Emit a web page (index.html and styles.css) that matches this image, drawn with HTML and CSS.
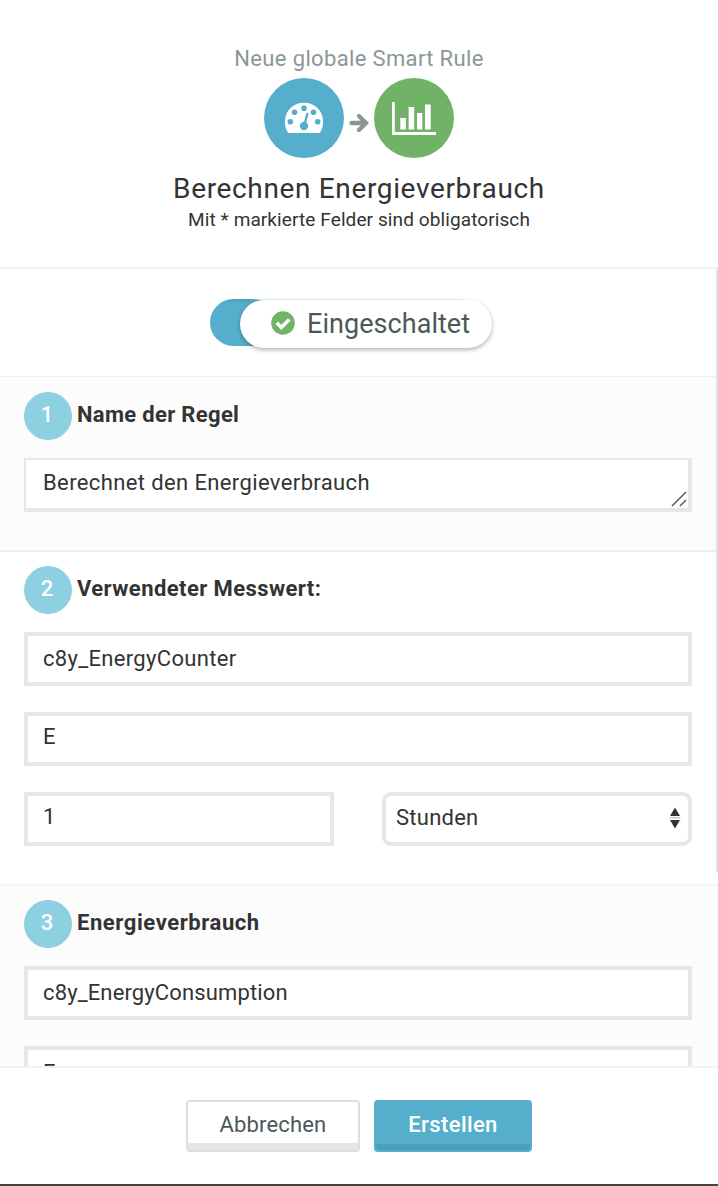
FILE: index.html
```
<!DOCTYPE html>
<html lang="de">
<head>
<meta charset="utf-8">
<title>Neue globale Smart Rule</title>
<link rel="stylesheet" href="styles.css">
</head>
<body>
<div class="modal">
  <header class="header">
    <p class="kicker"><span>Neue globale Smart Rule</span></p>
    <div class="flow">
      <span class="disc disc-blue">
        <svg width="40" height="32" viewBox="0 0 40 32"><path fill="#fff" d="M4.200 31A19.200 18.600 0 0 1 1 19.200a19 18.500 0 0 1 38 0a19.200 18.600 0 0 1-3.200 11.800z"/><g fill="#55afcc"><circle cx="6.300" cy="19.800" r="2.800"/><circle cx="10.500" cy="10.300" r="2.800"/><circle cx="20" cy="6.200" r="2.800"/><circle cx="29.500" cy="10.300" r="2.800"/><circle cx="33.700" cy="19.800" r="2.800"/><circle cx="20" cy="24" r="4.200"/></g><path d="M20.500 22.500L23.300 12" stroke="#55afcc" stroke-width="2.400" stroke-linecap="round"/></svg>
      </span>
      <svg class="arrow" width="20" height="20" viewBox="0 0 20 20"><path d="M2.500 10H16M10 3l7 7-7 7" fill="none" stroke="#8b9796" stroke-width="4.400" stroke-linecap="round"/></svg>
      <span class="disc disc-green">
        <svg width="44" height="33" viewBox="0 0 44 33"><path fill="#fff" d="M0 0h2.800v30H44v3H0zM8.300 16h5.600v11.500H8.300zM16.600 5h5.600v22.500h-5.600zM25 11h5.300v16.500H25zM33 2.500h5.700v25H33z"/></svg>
      </span>
    </div>
    <h1 class="title"><span>Berechnen Energieverbrauch</span></h1>
    <p class="note"><span>Mit * markierte Felder sind obligatorisch</span></p>
  </header>
  <main class="body">
    <section class="status">
      <div class="toggle"><div class="knob">
        <svg width="24" height="24" viewBox="0 0 24 24"><circle cx="12" cy="12" r="11.800" fill="#70b466"/><path d="M5.800 11.800l4.500 4.600 8-8" fill="none" stroke="#fff" stroke-width="3.600"/></svg>
        <span class="knob-text">Eingeschaltet</span>
      </div></div>
    </section>
    <section class="step step-one">
      <div class="head"><span class="num">1</span><h2 class="h-name">Name der Regel</h2></div>
      <div class="area"><span class="t-desc">Berechnet den Energieverbrauch</span>
        <svg class="grip" width="16" height="16" viewBox="0 0 16 16"><path d="M1 15L15 1M9 15l6-6" stroke="#5b5b5e" stroke-width="1.500"/></svg>
      </div>
    </section>
    <section class="step step-two">
      <div class="head"><span class="num">2</span><h2 class="h-value">Verwendeter Messwert:</h2></div>
      <div class="field"><span class="t-counter">c8y_EnergyCounter</span></div>
      <div class="field field-up">E</div>
      <div class="row">
        <div class="field field-up">1</div>
        <div class="field select"><span class="t-hours">Stunden</span>
          <svg class="updown" width="12" height="22" viewBox="0 0 12 22"><path fill="#333" d="M1 9l5-8.500L11 9zM1 13h10l-5 8.500z"/><path fill="#999" d="M0.500 10.500h11v0.800H0.500z"/></svg>
        </div>
      </div>
    </section>
    <section class="step step-three">
      <div class="head"><span class="num">3</span><h2 class="h-energy">Energieverbrauch</h2></div>
      <div class="field"><span class="t-cons">c8y_EnergyConsumption</span></div>
      <div class="field">E</div>
    </section>
    <div class="scrollbar"></div>
  </main>
  <footer class="footer">
    <div class="btn btn-plain"><span class="b-cancel">Abbrechen</span></div>
    <div class="btn btn-primary"><span class="b-create">Erstellen</span></div>
  </footer>
</div>
</body>
</html>
```
FILE: styles.css
```
* { box-sizing: border-box; }
body { margin: 0; background: #fff; color: #333; font-family: Roboto, "Liberation Sans", sans-serif; font-size: 22px; line-height: 26px; }
h1, h2, p { margin: 0; }
svg { display: block; flex: none; }
.modal { height: 1186px; display: flex; flex-direction: column; border-bottom: 2px solid #444; overflow: hidden; }
.header { height: 269px; flex: none; border-bottom: 2px solid #f1f1f1; padding-top: 46px; display: flex; flex-direction: column; align-items: center; white-space: nowrap; }
.kicker { color: #8b9796; height: 32px; letter-spacing: 0.35px; }
.flow { display: flex; align-items: center; }
.disc { width: 80px; height: 80px; border-radius: 50%; display: flex; align-items: center; justify-content: center; }
.disc-blue { background: #55afcc; }
.disc-green { background: #71b366; }
.arrow { margin: 10px 5px 0; }
.title { font-size: 28px; line-height: 34px; font-weight: 400; margin-top: 14px; letter-spacing: 0.65px; }
.note { font-size: 19px; line-height: 24px; margin-top: 2px; letter-spacing: 0.1px; }
.body { position: relative; flex: 1; min-height: 0; overflow: hidden; }
.status { height: 107px; padding: 30px 0 0 210px; }
.toggle { width: 272px; height: 47px; border-radius: 24px; background: linear-gradient(90deg, transparent 40px, #e3eff3 52px) 0 0 / 100% 1px no-repeat, linear-gradient(#4c9fbb, #55afcc 5px); padding: 1px 0 0 30px; }
.knob { width: 252px; height: 48px; border-radius: 24px; background: #fff; box-shadow: 0 2px 4px rgba(0, 0, 0, .3); display: flex; align-items: center; padding: 0 0 2px 31px; gap: 12px; color: #4b5858; font-size: 27px; letter-spacing: 0.05px; }
.knob-text { padding-top: 2px; }
.step { padding: 15px 26px 0 24px; border-top: 1px solid #eee; }
.step-one { height: 174px; background: #fcfcfc; }
.step-two { height: 334px; border-top-width: 2px; padding-top: 14px; }
.step-three { height: 250px; background: #fcfcfc; border-top: 2px solid #f5f5f5; padding-top: 14px; }
.head { display: flex; height: 48px; gap: 5px; margin-bottom: 18px; }
.num { width: 48px; height: 48px; border-radius: 50%; background: #8cd0e2; color: #fff; font-weight: 500; text-align: center; line-height: 45px; padding-right: 2px; }
.head h2 { font-size: 22px; line-height: 45px; font-weight: 700; white-space: nowrap; }
.head .h-name { letter-spacing: 0.32px; }
.head .h-value { letter-spacing: 0.42px; }
.head .h-energy { letter-spacing: 0.58px; }
.t-desc { letter-spacing: 0.38px; }
.t-counter { letter-spacing: 0.32px; }
.t-cons { letter-spacing: 0.13px; }
.t-hours { letter-spacing: 0.25px; }
.b-cancel { letter-spacing: 0.15px; }
.b-create { letter-spacing: 0.4px; }
.field { height: 54px; border: 4px solid #e6e8e7; background: #fff; padding: 0 0 0 15px; line-height: 46px; margin-bottom: 26px; white-space: nowrap; }
.field-up { line-height: 42px; }
.area { position: relative; height: 54px; border: 2px solid #e6e8e7; border-right-width: 4px; border-bottom-width: 4px; background: #fff; padding-left: 17px; line-height: 45px; }
.grip { position: absolute; right: 1px; bottom: 1px; }
.row { display: grid; grid-template-columns: 310px 310px; gap: 48px; }
.select { border-radius: 9px; padding: 0 7px 3px 10px; display: flex; justify-content: space-between; align-items: center; line-height: 26px; }
.scrollbar { position: absolute; right: 0; top: -1px; width: 2px; height: 604px; background: #dbe1e0; }
.footer { height: 118px; flex: none; border-top: 2px solid #f2f2f2; padding-top: 32px; display: flex; justify-content: center; gap: 14px; }
.btn { height: 52px; border: 2px solid #dbe0de; border-radius: 4px; text-align: center; line-height: 45px; box-shadow: inset 0 -7px #e5e5e5; }
.btn-plain { width: 174px; color: #4b5858; }
.btn-primary { width: 158px; color: #fff; font-weight: 500; background: #55afcc; border-color: #55afcc; box-shadow: inset 0 -6px #4d9eb8; }
```
